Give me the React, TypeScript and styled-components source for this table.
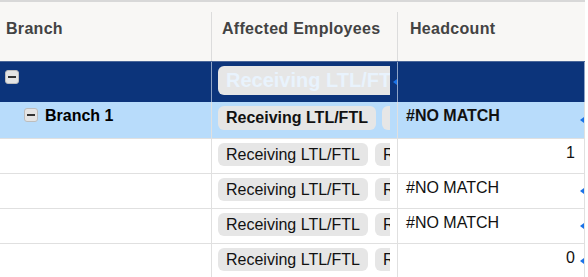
import React from 'react';
import styled, { createGlobalStyle, css } from 'styled-components';

const GlobalStyle = createGlobalStyle`
  html, body { margin: 0; padding: 0; background: #ffffff; }
  body { font-family: "Liberation Sans", Arial, sans-serif; }
`;

const COLS = '212px 186px 187px';

const Table = styled.div`
  width: 585px;
  border-top: 2px solid #d8d8d8;
  box-sizing: border-box;
`;

const HeaderRow = styled.div`
  display: grid;
  grid-template-columns: ${COLS};
  height: 59px;
  background: #f8f7f5;
`;

const HeaderCell = styled.div<{ $pad: number; $last?: boolean }>`
  position: relative;
  padding: 18px 0 0 ${(p) => p.$pad}px;
  font-size: 16px;
  font-weight: bold;
  letter-spacing: 0.3px;
  color: #434343;
  ${(p) =>
    !p.$last &&
    css`
      &::after {
        content: '';
        position: absolute;
        right: 0;
        top: 10px;
        bottom: 0;
        width: 1px;
        background: #dcdcdc;
      }
    `}
`;

type Tone = 'group' | 'branch' | 'plain';

const rowBg: Record<Tone, string> = {
  group: '#0c347b',
  branch: '#b8dcfb',
  plain: '#ffffff',
};

const Row = styled.div<{ $tone: Tone }>`
  display: grid;
  grid-template-columns: ${COLS};
  height: ${(p) => (p.$tone === 'group' ? 41 : p.$tone === 'branch' ? 36 : 35)}px;
  box-sizing: border-box;
  background: ${(p) => rowBg[p.$tone]};
  ${(p) =>
    p.$tone === 'group'
      ? css`border-top: 1px solid #4a6699;`
      : p.$tone === 'branch'
      ? css``
      : css`border-top: 1px solid #e0e0e0;`}
  &:last-child { border-bottom: 1px solid #e0e0e0; }
`;

const Cell = styled.div<{ $tone: Tone; $align?: 'left' | 'right' }>`
  position: relative;
  display: flex;
  align-items: flex-start;
  justify-content: ${(p) => (p.$align === 'right' ? 'flex-end' : 'flex-start')};
  box-sizing: border-box;
  border-right: 1px solid ${(p) => (p.$tone === 'group' ? '#8ea3c6' : '#e0e0e0')};
  overflow: hidden;
`;

const TreeCell = styled(Cell)<{ $indent: number }>`
  padding: ${(p) => (p.$tone === 'group' ? 7 : 5)}px 0 0 ${(p) => p.$indent}px;
  gap: 7px;
`;

const ChipClip = styled.div<{ $tone: Tone }>`
  display: flex;
  gap: ${(p) => (p.$tone === 'plain' ? 7 : 6)}px;
  margin: 4px 7px 0 6px;
  width: 172px;
  overflow: hidden;
  flex-shrink: 0;
`;

const Chip = styled.span<{ $tone: Tone }>`
  flex-shrink: 0;
  display: inline-block;
  box-sizing: border-box;
  white-space: nowrap;
  background: #e6e6e6;
  border-radius: 6px;
  padding: 0 8px;
  color: ${(p) => (p.$tone === 'group' ? '#e9f3fd' : '#111111')};
  font-weight: ${(p) => (p.$tone === 'plain' ? 'normal' : 'bold')};
  font-size: ${(p) => (p.$tone === 'group' ? 20 : 16)}px;
  height: ${(p) => (p.$tone === 'group' ? 29 : p.$tone === 'branch' ? 24 : 23)}px;
  line-height: ${(p) => (p.$tone === 'group' ? 29 : p.$tone === 'branch' ? 24 : 23)}px;
`;

const Toggle = styled.span`
  flex-shrink: 0;
  width: 14px;
  height: 14px;
  box-sizing: border-box;
  border: 1px solid #bdbdbd;
  border-radius: 3px;
  background: #e4e4e4;
  display: flex;
  align-items: center;
  justify-content: center;
  margin-top: 1px;
  &::before {
    content: '';
    width: 8px;
    height: 2px;
    background: #333333;
  }
`;

const Label = styled.span`
  font-size: 16px;
  font-weight: bold;
  color: #000000;
  line-height: 18px;
`;

const Value = styled.span<{ $bold?: boolean; $align?: 'left' | 'right' }>`
  font-size: 16px;
  line-height: 20px;
  color: #111111;
  font-weight: ${(p) => (p.$bold ? 'bold' : 'normal')};
  padding: 4px ${(p) => (p.$align === 'right' ? 9 : 0)}px 0 ${(p) => (p.$align === 'right' ? 0 : 8)}px;
`;

const Marker = styled.span`
  position: absolute;
  right: 0;
  top: 50%;
  margin-top: -3px;
  width: 0;
  height: 0;
  border-top: 3.5px solid transparent;
  border-bottom: 3.5px solid transparent;
  border-right: 4px solid #1a73e8;
`;

type DataRow = {
  tone: Tone;
  branch?: string;
  indent: number;
  toggle?: boolean;
  chips: string[];
  headcount?: string;
  align?: 'left' | 'right';
  chipMarker?: boolean;
  countMarker?: boolean;
};

const rows: DataRow[] = [
  { tone: 'group', indent: 5, toggle: true, chips: ['Receiving LTL/FTL'], chipMarker: true },
  {
    tone: 'branch',
    branch: 'Branch 1',
    indent: 24,
    toggle: true,
    chips: ['Receiving LTL/FTL', 'Receiving'],
    headcount: '#NO MATCH',
    countMarker: true,
  },
  { tone: 'plain', indent: 0, chips: ['Receiving LTL/FTL', 'Receiving'], headcount: '1', align: 'right' },
  { tone: 'plain', indent: 0, chips: ['Receiving LTL/FTL', 'Receiving'], headcount: '#NO MATCH', countMarker: true },
  { tone: 'plain', indent: 0, chips: ['Receiving LTL/FTL', 'Receiving'], headcount: '#NO MATCH', countMarker: true },
  { tone: 'plain', indent: 0, chips: ['Receiving LTL/FTL', 'Receiving'], headcount: '0', align: 'right', countMarker: true },
];

export default function App() {
  return (
    <>
      <GlobalStyle />
      <Table>
        <HeaderRow>
          <HeaderCell $pad={6}>Branch</HeaderCell>
          <HeaderCell $pad={10}>Affected Employees</HeaderCell>
          <HeaderCell $pad={12} $last>
            Headcount
          </HeaderCell>
        </HeaderRow>
        {rows.map((r, i) => (
          <Row key={i} $tone={r.tone}>
            <TreeCell $tone={r.tone} $indent={r.indent}>
              {r.toggle && <Toggle />}
              {r.branch && <Label>{r.branch}</Label>}
            </TreeCell>
            <Cell $tone={r.tone}>
              <ChipClip $tone={r.tone}>
                {r.chips.map((c, j) => (
                  <Chip key={j} $tone={r.tone}>
                    {c}
                  </Chip>
                ))}
              </ChipClip>
              {r.chipMarker && <Marker />}
            </Cell>
            <Cell $tone={r.tone} $align={r.align}>
              {r.headcount && (
                <Value $bold={r.tone === 'branch'} $align={r.align}>
                  {r.headcount}
                </Value>
              )}
              {r.countMarker && <Marker />}
            </Cell>
          </Row>
        ))}
      </Table>
    </>
  );
}
